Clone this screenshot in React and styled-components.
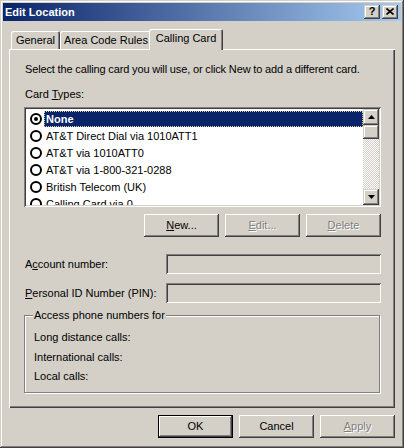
import React from 'react';
import styled, { createGlobalStyle } from 'styled-components';

const face = '#D4D0C8';
const shade = '#808080';
const dark = '#404040';

const GlobalStyle = createGlobalStyle`
	html, body {
		margin: 0;
		padding: 0;
		background: ${face};
	}
	body {
		font-family: 'Liberation Sans', Arial, sans-serif;
		font-size: 11px;
		color: #000;
	}
`;

const raised = `box-shadow: inset -1px -1px ${dark}, inset 1px 1px #fff, inset -2px -2px ${shade}, inset 2px 2px ${face};`;
const frame = `box-shadow: inset -1px -1px ${dark}, inset 1px 1px ${face}, inset -2px -2px ${shade}, inset 2px 2px #fff;`;
const sunken = `box-shadow: inset 1px 1px ${shade}, inset -1px -1px #fff, inset 2px 2px ${dark}, inset -2px -2px ${face};`;

const Window = styled.div`
	width: 404px;
	height: 448px;
	box-sizing: border-box;
	padding: 3px;
	background: ${face};
	${frame}
	display: flex;
	flex-direction: column;
`;

const TitleBar = styled.div`
	height: 18px;
	display: flex;
	align-items: center;
	padding: 0 3px 0 2px;
	background: linear-gradient(to right, #0a246a, #a6caf0);
	color: #fff;
	font-weight: bold;
	font-size: 11px;
`;
const TitleText = styled.span`
	flex: 1;
	line-height: 13px;
`;
const TitleButtons = styled.div`
	display: flex;
	gap: 2px;
`;
const CaptionBtn = styled.div`
	width: 16px;
	height: 14px;
	box-sizing: border-box;
	background: ${face};
	${frame}
	display: flex;
	align-items: center;
	justify-content: center;
	color: #000;
	font-weight: bold;
	font-size: 11px;
	line-height: 11px;
	padding-bottom: 1px;
`;

const Body = styled.div`
	flex: 1;
	display: flex;
	flex-direction: column;
	padding: 8px 6px 0;
`;

const TabRow = styled.div`
	display: flex;
	align-items: flex-end;
	height: 20px;
	padding-left: 2px;
`;
const Tab = styled.div`
	position: relative;
	z-index: ${p => (p.$active ? 2 : 1)};
	width: ${p => p.$w}px;
	height: ${p => (p.$active ? 21 : 18)}px;
	margin: ${p => (p.$active ? '0 0 -1px -3px' : '0')};
	box-sizing: border-box;
	background: ${face};
	border-radius: 2px 2px 0 0;
	box-shadow: inset 1px 1px #fff, inset -1px 0 ${dark}, inset -2px 0 ${shade};
	display: flex;
	align-items: center;
	justify-content: center;
	line-height: 13px;
	padding-bottom: ${p => (p.$active ? 3 : 0)}px;
`;

const Panel = styled.div`
	position: relative;
	z-index: 1;
	width: 386px;
	height: 359px;
	box-sizing: border-box;
	padding: 14px 14px 0 15px;
	background: ${face};
	box-shadow: inset 1px 1px #fff, inset -1px -1px ${dark}, inset -2px -2px ${shade};
	display: flex;
	flex-direction: column;
`;

const Line = styled.div`
	line-height: 13px;
	margin-top: ${p => p.$mt || 0}px;
	padding-left: 1px;
	white-space: nowrap;
	letter-spacing: ${p => p.$ls || 0}px;
`;

const ListBox = styled.div`
	margin-top: 6px;
	width: 357px;
	height: 100px;
	box-sizing: border-box;
	padding: 2px;
	background: #fff;
	${sunken}
	display: flex;
`;
const Items = styled.div`
	flex: 1;
	padding-top: 1px;
	overflow: hidden;
`;
const Item = styled.div`
	height: 17px;
	display: flex;
	align-items: center;
	padding-left: 4px;
`;
const ItemLabel = styled.div`
	flex: 1;
	margin-left: 2px;
	height: 16px;
	display: flex;
	align-items: center;
	padding-left: 2px;
	white-space: nowrap;
	${p =>
		p.$sel &&
		`background: #0a246a; color: #fff; font-weight: bold; outline: 1px dotted #d8d0a0; outline-offset: -1px;`}
`;

const ScrollBar = styled.div`
	width: 16px;
	display: flex;
	flex-direction: column;
`;
const ScrollBtn = styled.div`
	width: 16px;
	height: ${p => p.$h || 16}px;
	box-sizing: border-box;
	background: ${face};
	${frame}
	display: flex;
	align-items: center;
	justify-content: center;
`;
const Track = styled.div`
	flex: 1;
	background: repeating-conic-gradient(${face} 0% 25%, #fff 0% 50%) 0 0 / 2px 2px;
`;

const ButtonRow = styled.div`
	display: flex;
	justify-content: flex-end;
	gap: 6px;
	margin-top: ${p => p.$mt}px;
`;
const Button = styled.div`
	width: 75px;
	height: 23px;
	box-sizing: border-box;
	background: ${face};
	${raised}
	${p => p.$default && `border: 1px solid #000;`}
	display: flex;
	align-items: center;
	justify-content: center;
	line-height: 13px;
	color: ${p => (p.$disabled ? shade : '#000')};
	text-shadow: ${p => (p.$disabled ? '1px 1px 0 #fff' : 'none')};
	padding-bottom: 1px;
`;

const FieldRow = styled.div`
	display: flex;
	align-items: center;
	height: 20px;
	margin-top: ${p => p.$mt}px;
`;
const FieldLabel = styled.div`
	width: 142px;
	padding-left: 1px;
	box-sizing: border-box;
	line-height: 13px;
`;
const Field = styled.div`
	width: 215px;
	height: 20px;
	box-sizing: border-box;
	background: ${face};
	${sunken}
`;

const Group = styled.div`
	margin-top: 12px;
	width: 356px;
	height: 78px;
	box-sizing: border-box;
	border: 1px solid ${shade};
	box-shadow: 1px 1px 0 #fff, inset 1px 1px 0 #fff;
	display: flex;
	flex-direction: column;
`;
const Legend = styled.div`
	align-self: flex-start;
	margin: -7px 0 0 8px;
	padding: 0 1px;
	line-height: 13px;
	background: ${face};
`;
const GroupLines = styled.div`
	margin-top: 6px;
	padding-left: 9px;
`;
const GroupLine = styled.div`
	line-height: 19.5px;
`;

const Radio = ({ checked }) => (
	<svg width='12' height='12' viewBox='0 0 12 12'>
		<circle cx='6' cy='6' r='5' fill='#fff' stroke='#000' strokeWidth='2' />
		{checked && <circle cx='6' cy='6' r='2' fill='#000' />}
	</svg>
);

const Arrow = ({ down }) => (
	<svg width='7' height='4' viewBox='0 0 7 4'>
		<path d={down ? 'M0 0H7L3.5 4Z' : 'M0 4H7L3.5 0Z'} fill='#000' />
	</svg>
);

const cards = [
	'None',
	'AT&T Direct Dial via 1010ATT1',
	'AT&T via 1010ATT0',
	'AT&T via 1-800-321-0288',
	'British Telecom (UK)',
	'Calling Card via 0'
];

class App extends React.Component {
	render() {
		return (
			<Window>
				<GlobalStyle />
				<TitleBar>
					<TitleText>Edit Location</TitleText>
					<TitleButtons>
						<CaptionBtn>?</CaptionBtn>
						<CaptionBtn>
							<svg width='8' height='7' viewBox='0 0 8 7'>
								<path d='M0.5 0.5L7.5 6.5M7.5 0.5L0.5 6.5' stroke='#000' strokeWidth='1.6' />
							</svg>
						</CaptionBtn>
					</TitleButtons>
				</TitleBar>
				<Body>
					<TabRow>
						<Tab $w={49}>General</Tab>
						<Tab $w={92}>Area Code Rules</Tab>
						<Tab $w={74} $active>
							Calling Card
						</Tab>
					</TabRow>
					<Panel>
						<Line $ls={-0.15}>
							Select the calling card you will use, or click New to add a different card.
						</Line>
						<Line $mt={12}>
							Card <u>T</u>ypes:
						</Line>
						<ListBox>
							<Items>
								{cards.map((c, i) => (
									<Item key={c}>
										<Radio checked={i === 0} />
										<ItemLabel $sel={i === 0}>{c}</ItemLabel>
									</Item>
								))}
							</Items>
							<ScrollBar>
								<ScrollBtn>
									<Arrow />
								</ScrollBtn>
								<Track>
									<ScrollBtn $h={14} />
								</Track>
								<ScrollBtn>
									<Arrow down />
								</ScrollBtn>
							</ScrollBar>
						</ListBox>
						<ButtonRow $mt={7}>
							<Button>
								<span>
									<u>N</u>ew...
								</span>
							</Button>
							<Button $disabled>
								<span>
									<u>E</u>dit...
								</span>
							</Button>
							<Button $disabled>
								<span>
									<u>D</u>elete
								</span>
							</Button>
						</ButtonRow>
						<FieldRow $mt={17}>
							<FieldLabel>
								A<u>c</u>count number:
							</FieldLabel>
							<Field />
						</FieldRow>
						<FieldRow $mt={9}>
							<FieldLabel>
								<u>P</u>ersonal ID Number (PIN):
							</FieldLabel>
							<Field />
						</FieldRow>
						<Group>
							<Legend>Access phone numbers for</Legend>
							<GroupLines>
								<GroupLine>Long distance calls:</GroupLine>
								<GroupLine>International calls:</GroupLine>
								<GroupLine>Local calls:</GroupLine>
							</GroupLines>
						</Group>
					</Panel>
					<ButtonRow $mt={7}>
						<Button $default>OK</Button>
						<Button>Cancel</Button>
						<Button $disabled>
							<span>
								<u>A</u>pply
							</span>
						</Button>
					</ButtonRow>
				</Body>
			</Window>
		);
	}
}

export default App;
